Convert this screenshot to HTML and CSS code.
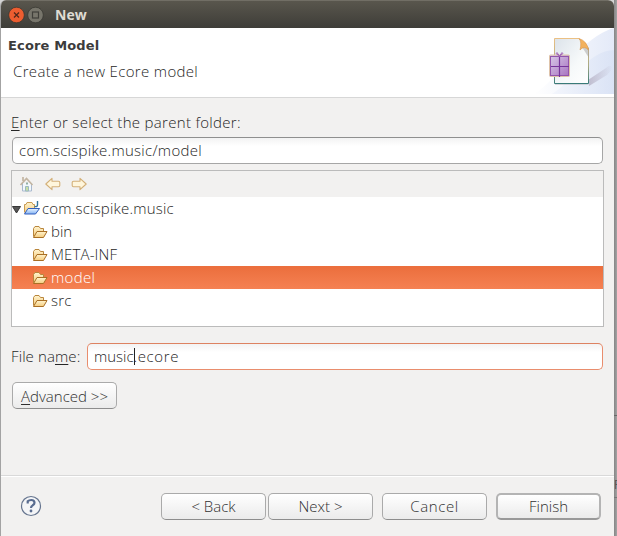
FILE: index.html
```html
<!DOCTYPE html>
<html lang="en">
<head>
<meta charset="utf-8">
<title>New</title>
<link rel="stylesheet" href="styles.css">
</head>
<body>
<svg class="defs" width="0" height="0">
  <defs>
    <linearGradient id="gold" x2="0" y2="1"><stop stop-color="#fff3ce"/><stop offset="1" stop-color="#f5cd7e"/></linearGradient>
    <linearGradient id="blue" x2="0" y2="1"><stop stop-color="#eaf5ff"/><stop offset="1" stop-color="#83b2f4"/></linearGradient>
    <linearGradient id="paper" x2="1" y2="1"><stop stop-color="#dce3ea"/><stop offset=".6" stop-color="#f6f9fa"/><stop offset="1" stop-color="#fff"/></linearGradient>
    <linearGradient id="edge" x2="0" y2="1"><stop stop-color="#ebc083"/><stop offset=".6" stop-color="#a9aa83"/><stop offset="1" stop-color="#397b79"/></linearGradient>
    <linearGradient id="violet" x2="1" y2="1"><stop stop-color="#d9cbe8"/><stop offset="1" stop-color="#a671bf"/></linearGradient>
    <linearGradient id="sky"><stop stop-color="#fff"/><stop offset="1" stop-color="#e4eaf8"/></linearGradient>
    <linearGradient id="sky2"><stop stop-color="#f1f4fc"/><stop offset="1" stop-color="#d6e0f4"/></linearGradient>
    <linearGradient id="shade" x2="1" y2="0"><stop stop-color="#aaa3b8"/><stop offset="1" stop-color="#aaa3b8" stop-opacity="0"/></linearGradient>
    <symbol id="folder" viewBox="0 0 16 14">
      <path d="M1.500 11.500V3.500L3 1.500H7L8.500 3.500H11.500V6" fill="url(#gold)" stroke="#b9863c"/>
      <path d="M1.500 12.500L5 6.500H15L11.500 12.500Z" fill="url(#gold)" stroke="#a96f25" stroke-linejoin="round"/>
    </symbol>
  </defs>
</svg>
<div class="screen">
  <div class="window">
    <header class="titlebar">
      <svg class="controls" width="38" height="20" viewBox="0 0 38 20">
        <circle cx="9.5" cy="10" r="7.8" fill="#ed5d30" stroke="#34332e" stroke-width=".7"/>
        <path d="M7 7.500l5 5m0-5l-5 5" stroke="#53281a" stroke-width="1.300"/>
        <circle cx="28.500" cy="10" r="7.800" fill="#77756b" stroke="#34332e" stroke-width=".7"/>
        <rect x="25.500" y="7" width="6" height="6" fill="none" stroke="#403f3a" stroke-width="1.200"/>
      </svg>
      <span class="title">New</span>
    </header>
    <section class="banner">
      <div class="headings"><h1>Ecore Model</h1><p>Create a new Ecore model</p></div>
      <svg class="art" width="84" height="66" viewBox="530 28 84 66">
        <path d="M534 94C560 78 582 37 614 28V94Z" fill="url(#sky)"/>
        <path d="M552 94C570 84 589 50 614 50V94Z" fill="url(#sky2)" opacity=".7"/>
        <path d="M588 80L609 66Q617 65 607 75L589 86Z" fill="url(#shade)" opacity=".65"/>
        <path d="M554.5 38.5H579L588.5 48V83.5H554.5Z" fill="url(#paper)" stroke="url(#edge)"/>
        <path d="M582 47L589 48V58Z" fill="#999" opacity=".45"/>
        <path d="M579 38.5Q587 41 588.5 50Q584 45 580 50Q582 42 579 38.5Z" fill="#f3b15c" stroke="#d8954b" stroke-width=".6"/>
        <path d="M555 84.5H588" stroke="#c7c8cf" opacity=".7"/>
        <rect x="549.500" y="55" width="20" height="21.500" rx="1" fill="url(#violet)" stroke="#dfc4aa"/>
        <rect x="550.500" y="56.500" width="18" height="19" fill="none" stroke="#9255ad"/>
        <path d="M559.500 57V77M551 66.500H569" stroke="#76359a" stroke-width="1.200"/>
        <path d="M559.500 56L556 53.500l1-1 2.500 3.500M559.500 56l3.500-2.500-1-1-2.500 3.500" fill="none" stroke="#a468b7"/>
      </svg>
    </section>
    <main class="content">
      <label class="prompt"><u>E</u>nter or select the parent folder:</label>
      <div class="field path"><span>com.scispike.music/model</span></div>
      <div class="browser">
        <div class="toolbar">
          <svg width="16" height="16" viewBox="0 0 16 16"><path d="M3.500 7v8h9V7" fill="#f2f7fb" stroke="#a9b9ce"/><path d="M4 1v4M1.500 9l6-6.500 6 6.500" fill="none" stroke="#c3b5a2" stroke-width="1.700"/><path d="M6.500 15v-4.500h3v4.500Z" fill="#c9dfa3" stroke="#9bb9bf"/><path d="M7 7.500h2" stroke="#94b0a5" stroke-width="2"/></svg>
          <svg width="16" height="16" viewBox="0 0 16 16"><path d="M.8 8L7 2.300V5.300H13.500Q14.800 5.300 14.800 6.500V9.500Q14.800 10.700 13.500 10.700H7V13.700Z" fill="#fff6dc" stroke="#d3b079" stroke-width="1.100" stroke-linejoin="round"/></svg>
          <svg width="16" height="16" viewBox="0 0 16 16"><path d="M15.200 8L9 2.300V5.300H2.500Q1.200 5.300 1.200 6.500V9.500Q1.200 10.700 2.500 10.700H9V13.700Z" fill="#fff6dc" stroke="#d3b079" stroke-width="1.100" stroke-linejoin="round"/></svg>
        </div>
        <div class="row root">
          <svg width="11" height="16" viewBox="0 0 11 16"><path d="M.5 5.500H8.500L4.500 12Z" fill="#555" stroke="#383838"/></svg>
          <svg width="18" height="17" viewBox="0 0 18 17"><path d="M1.500 12.500V4.500H3L4 2.500H9L10 4.500H11.500V9" fill="url(#gold)" stroke="#c79a52"/><path d="M1.500 14L5 8.500H16.500L12.500 14Z" fill="url(#blue)" stroke="#315fbd"/><path d="M14.500 1V5Q14.500 7.200 11.500 6.500" fill="none" stroke="#347499" stroke-width="1.400"/></svg>
          <span class="t-root">com.scispike.music</span>
        </div>
        <div class="row child"><svg width="16" height="14"><use href="#folder"/></svg><span>bin</span></div>
        <div class="row child"><svg width="16" height="14"><use href="#folder"/></svg><span class="t-meta">META-INF</span></div>
        <div class="row child selected"><svg width="16" height="14"><use href="#folder"/></svg><span class="t-model">model</span></div>
        <div class="row child"><svg width="16" height="14"><use href="#folder"/></svg><span class="t-src">src</span></div>
      </div>
      <div class="filename">
        <label>File na<u>m</u>e:</label>
        <div class="field active"><span class="t-music">music</span><i class="caret"></i><span class="t-ext">.ecore</span></div>
      </div>
      <button class="advanced"><span><u>A</u>dvanced &gt;&gt;</span></button>
    </main>
    <footer class="footer">
      <svg class="help" width="22" height="22" viewBox="0 0 22 22"><circle cx="11" cy="11" r="9.500" fill="#f4f5f7" stroke="#66758f" stroke-width="1.200"/><path d="M7.700 8.500V6.300Q9 5 11.300 5Q14.500 5 14.500 7.700Q14.500 9.200 12.700 10.300Q11 11.400 11 13" fill="none" stroke="#596c90" stroke-width="2.200"/><circle cx="11" cy="16" r="1.400" fill="#596c90"/></svg>
      <button class="back"><span>&lt; Back</span></button>
      <button class="next"><span>Next &gt;</span></button>
      <button class="cancel"><span>Cancel</span></button>
      <button class="finish"><span>Finish</span></button>
    </footer>
  </div>
  <div class="behind"><div class="behind-tab">P</div></div>
</div>
</body>
</html>
```
FILE: styles.css
```css
* { box-sizing: border-box; }
body { margin: 0; overflow: hidden; font: 300 15px/20px "Open Sans", "Noto Sans", sans-serif; color: #262626; }
.defs { position: absolute; }
svg { display: block; flex: none; }
span, label { white-space: nowrap; }
.screen { display: flex; width: 617px; height: 536px; background: linear-gradient(#d5d5d5, #a7a7a7 90px); }
.window { width: 614px; height: 536px; display: flex; flex-direction: column; background: #f2f1f0; border-left: 1px solid #a3a3a3; border-radius: 6px 6px 0 0; overflow: hidden; }
.titlebar { height: 28px; display: flex; align-items: center; padding-left: 6px; background: linear-gradient(#59564d, #3e3d38); border-top: 1px solid #716e65; }
.title { margin-left: 10px; color: #dfdbd2; font: bold 14px/20px "Open Sans", sans-serif; }
.banner { height: 70px; display: flex; justify-content: space-between; background: #fff; border-bottom: 1px solid #d7d7d7; }
.headings { padding: 9px 0 0 7px; }
h1 { margin: 0; font: bold 13px/18px "DejaVu Sans", sans-serif; letter-spacing: .15px; color: #3c3c3c; white-space: nowrap; }
.headings p { margin: 6px 0 0 5px; letter-spacing: .34px; white-space: nowrap; }
.content { height: 377px; padding: 14px 10px 0 10px; }
.prompt { display: block; height: 25px; letter-spacing: .3px; }
u { text-decoration-thickness: 1px; text-underline-offset: 2px; }
.field { height: 27px; display: flex; align-items: center; background: linear-gradient(#f3f3f3, #fff 8px); border: 1px solid #a6a6a6; border-radius: 5px; border-top-color: #8f8f8f; }
.field span { margin-top: -2px; }
.path { margin: 0 1px; padding-left: 6px; letter-spacing: .29px; }
.browser { height: 157px; margin: 6px 0 0; border: 1px solid #bbb; background: #fff; }
.toolbar { height: 26px; padding: 5px 0 0 7px; display: flex; gap: 10px; background: #f2f1f0; }
.row { height: 23px; display: flex; align-items: center; }
.row span { margin-top: -2px; }
.root span { margin-left: 1px; }
.t-root { letter-spacing: .2px; }
.t-meta { letter-spacing: .13px; }
.t-model { letter-spacing: .35px; }
.t-src { letter-spacing: .25px; }
.child { padding-left: 20px; gap: 3px; }
.selected { color: #fff; background: linear-gradient(#eb6e3c, #f58153); }
.filename { height: 27px; margin: 16px 1px 0 0; display: flex; align-items: center; }
.filename label { width: 76px; margin-top: -2px; letter-spacing: .1px; }
.active { flex: 1; border-color: #e98d6d; border-top-color: #dd8261; padding-left: 6px; }
.caret { width: 1px; height: 17px; margin-right: -1px; background: #222; }
.t-ext { letter-spacing: .6px; }
button { height: 27px; padding: 0; display: flex; align-items: center; justify-content: center; font: inherit; color: #303030; background: linear-gradient(#fff, #ebebeb); border: 1px solid #aaa; border-bottom-color: #8d8d8d; border-radius: 5px; }
.advanced { width: 105px; margin: 12px 0 0 1px; }
.footer { height: 61px; padding: 0 13px 0 19px; display: flex; align-items: center; border-top: 1px solid #d9d9d9; box-shadow: inset 0 1px #fff; }
.footer button { width: 105px; }
.footer .back { margin-left: 119px; }
.footer .next { margin-left: 2px; }
.footer .cancel { margin-left: 9px; letter-spacing: .6px; }
.footer .finish { margin-left: 9px; border: 2px solid #b4b4b4; border-bottom-color: #999; }
.behind { width: 3px; height: 536px; padding-top: 415px; background: linear-gradient(90deg, #858585, #a4a4a4); overflow: hidden; }
.behind-tab { height: 83px; border-top: 1px solid #686868; border-bottom: 1px solid #777; padding-top: 59px; font-size: 13px; line-height: 18px; color: #333; }
```
